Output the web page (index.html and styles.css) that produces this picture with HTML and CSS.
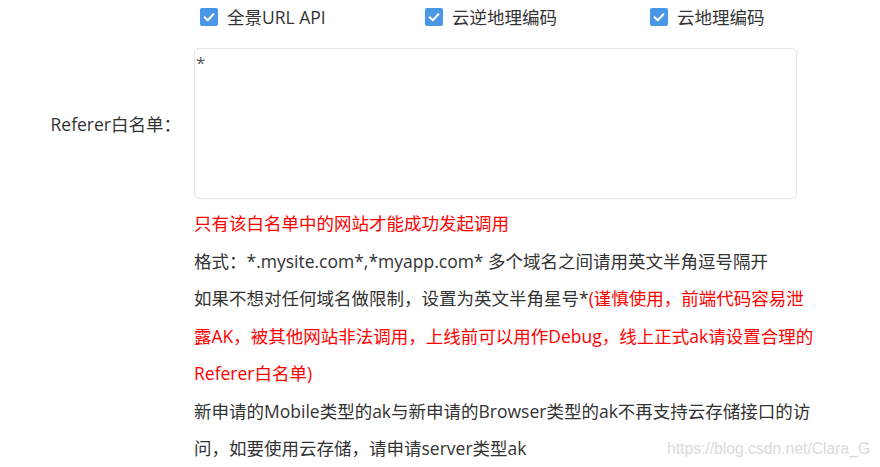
FILE: index.html
```html
<!DOCTYPE html>
<html lang="zh-CN">
<head>
<meta charset="utf-8">
<title>Referer白名单</title>
<link rel="stylesheet" href="styles.css">
</head>
<body>
<div class="page">
  <div class="checks">
    <label class="check"><span class="box"><svg viewBox="0 0 18 18" width="18" height="18"><path d="M4.6 9.2 L7.8 12.2 L13.4 6.2" fill="none" stroke="#fff" stroke-width="2" stroke-linecap="round" stroke-linejoin="round"/></svg></span><span class="check-text">全景URL API</span></label>
    <label class="check"><span class="box"><svg viewBox="0 0 18 18" width="18" height="18"><path d="M4.6 9.2 L7.8 12.2 L13.4 6.2" fill="none" stroke="#fff" stroke-width="2" stroke-linecap="round" stroke-linejoin="round"/></svg></span><span class="check-text">云逆地理编码</span></label>
    <label class="check"><span class="box"><svg viewBox="0 0 18 18" width="18" height="18"><path d="M4.6 9.2 L7.8 12.2 L13.4 6.2" fill="none" stroke="#fff" stroke-width="2" stroke-linecap="round" stroke-linejoin="round"/></svg></span><span class="check-text">云地理编码</span></label>
  </div>

  <div class="form-item">
    <div class="form-label">Referer白名单：</div>
    <div class="textarea">*</div>
  </div>

  <div class="tips">
    <p class="red">只有该白名单中的网站才能成功发起调用</p>
    <p>格式：*.mysite.com*,*myapp.com* 多个域名之间请用英文半角逗号隔开</p>
    <p>如果不想对任何域名做限制，设置为英文半角星号*<span class="red">(谨慎使用，前端代码容易泄露AK，被其他网站非法调用，上线前可以用作Debug，线上正式ak请设置合理的Referer白名单)</span></p>
    <p>新申请的Mobile类型的ak与新申请的Browser类型的ak不再支持云存储接口的访问，如要使用云存储，请申请server类型ak</p>
  </div>

  <div class="watermark">https://blog.csdn.net/Clara_G</div>
</div>
</body>
</html>
```

FILE: styles.css
```css
html, body {
  margin: 0;
  padding: 0;
  background: #ffffff;
}

body {
  font-family: "Open Sans", "Noto Sans CJK SC", sans-serif;
  font-size: 17.5px;
  color: #333333;
  width: 880px;
  height: 467px;
  overflow: hidden;
}

.page {
  position: relative;
  height: 467px;
}

.checks {
  display: flex;
  padding-left: 200px;
  height: 34px;
  align-items: center;
}

.check {
  display: flex;
  align-items: center;
  gap: 9px;
  width: 225px;
  line-height: 20px;
}

.box {
  width: 18px;
  height: 18px;
  border-radius: 2px;
  background: #4a97e8;
  display: flex;
}

.box svg {
  display: block;
}

.form-item {
  display: flex;
  align-items: center;
  margin-top: 14px;
}

.form-label {
  width: 194px;
  box-sizing: border-box;
  padding-right: 13px;
  text-align: right;
  line-height: 24px;
}

.textarea {
  width: 603px;
  height: 151px;
  box-sizing: border-box;
  border: 1px solid #dfe3ea;
  border-radius: 5px;
  padding: 2px 1px;
  line-height: 24px;
  font-size: 17px;
  color: #555;
}

.tips {
  margin-left: 194px;
  margin-top: 6px;
  width: 625px;
  line-height: 37.5px;
}

.tips p {
  margin: 0;
}

.red {
  color: #ff0000;
}

.watermark {
  position: absolute;
  left: 667px;
  top: 439px;
  font-family: "Liberation Sans", Arial, sans-serif;
  font-size: 15.7px;
  line-height: 20px;
  color: #dadada;
  white-space: nowrap;
}
```
